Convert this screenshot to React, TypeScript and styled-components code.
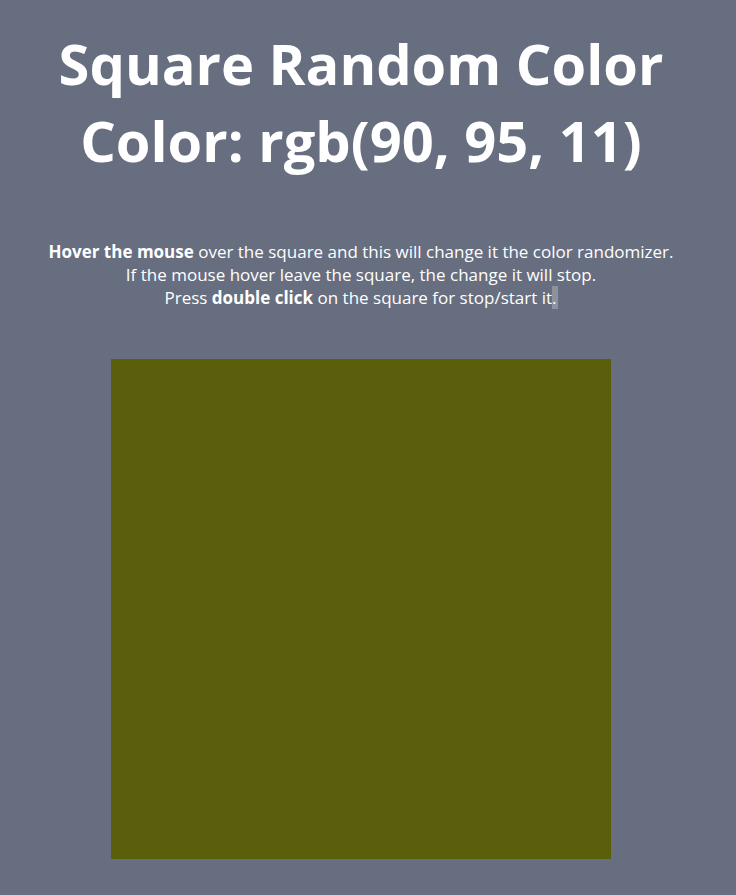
import React from "react";
import styled, { createGlobalStyle } from "styled-components";

const GlobalStyle = createGlobalStyle`
  html, body {
    margin: 0;
    padding: 0;
    background: #666e80;
  }
  body {
    font-family: "Open Sans", "Noto Sans", sans-serif;
    color: #fff;
  }
`;

const Page = styled.main`
  width: calc(100% - 14px);
  display: flex;
  flex-direction: column;
  align-items: center;
  padding-top: 25px;
  padding-bottom: 36px;
`;

const Title = styled.h1`
  margin: 0;
  font-size: 56px;
  font-weight: 700;
  line-height: 77px;
  text-align: center;
`;

const Info = styled.p`
  margin: 61px 0 0;
  font-size: 17px;
  line-height: 23px;
  text-align: center;
`;

const Selected = styled.span`
  background: #8d929e;
  padding-right: 1px;
`;

const Square = styled.div<{ $color: string }>`
  margin-top: 50px;
  width: 500px;
  height: 500px;
  background: ${(p) => p.$color};
`;

const App = () => {
  const color = "rgb(90, 95, 11)";
  return (
    <>
      <GlobalStyle />
      <Page>
        <Title>
          Square Random Color
          <br />
          Color: {color}
        </Title>
        <Info>
          <b>Hover the mouse</b> over the square and this will change it the color randomizer.
          <br />
          If the mouse hover leave the square, the change it will stop.
          <br />
          Press <b>double click</b> on the square for stop/start it<Selected>.</Selected>
        </Info>
        <Square $color={color} />
      </Page>
    </>
  );
};

export default App;
